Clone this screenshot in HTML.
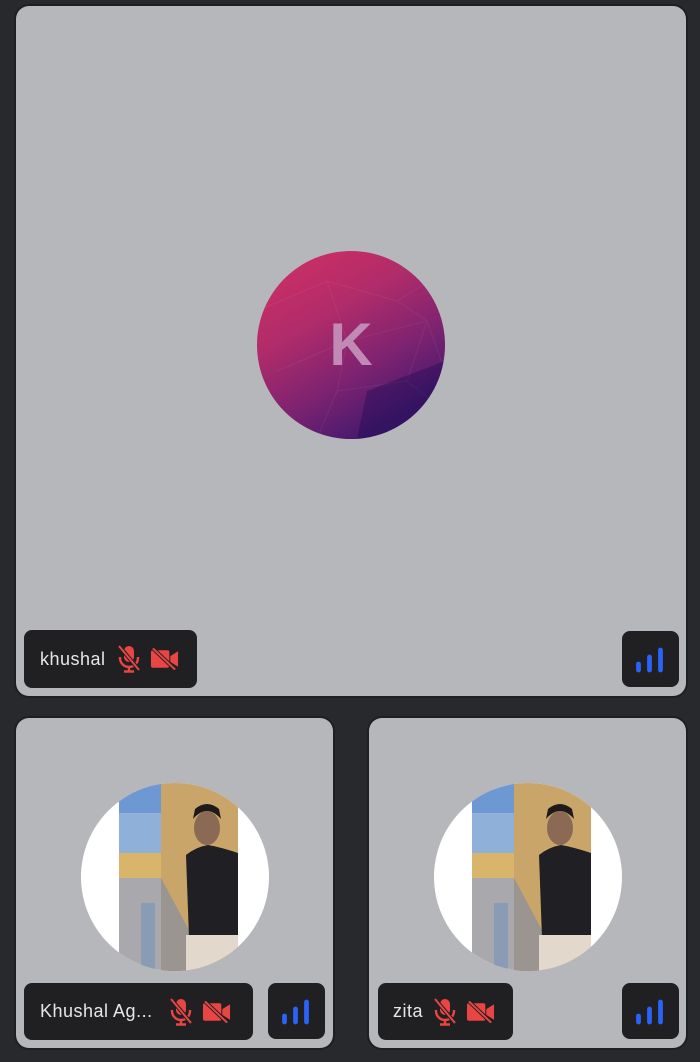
<!DOCTYPE html>
<html><head><meta charset="utf-8"><style>
html,body{margin:0;padding:0;background:#28292d;width:700px;height:1062px;overflow:hidden;font-family:"Liberation Sans",sans-serif}
.tile{position:absolute;background:#b6b7bb;border-radius:13px;box-shadow:0 0 0 2px #1e1f22}
.chip{position:absolute;background:#202022;border-radius:8px;color:#e6e6e6;font-size:18px;letter-spacing:0.5px;display:flex;align-items:center}
.sig{position:absolute;background:#202022;border-radius:8px;width:57px;height:56px}
.av{position:absolute;width:188px;height:188px;border-radius:50%;overflow:hidden}
</style></head><body>
<svg width="0" height="0" style="position:absolute"><defs>
<symbol id="mic" viewBox="0 0 24 28"><rect x="7" y="1" width="10" height="16" rx="5" fill="#e84545"/><path d="M3 12v1a9 9 0 0 0 18 0v-1" stroke="#e84545" stroke-width="2.4" fill="none"/><path d="M12 22v4M7 26.5h10" stroke="#e84545" stroke-width="2.4"/><path d="M2 1L22 25" stroke="#202022" stroke-width="4"/><path d="M2 1L22 25" stroke="#e84545" stroke-width="2"/></symbol>
<symbol id="cam" viewBox="0 0 30 22"><rect x="1" y="2" width="19" height="18" rx="2" fill="#e84545"/><path d="M21 8l8-5v16l-8-5z" fill="#e84545"/><path d="M3 0L26 22" stroke="#202022" stroke-width="4"/><path d="M3 0L26 22" stroke="#e84545" stroke-width="2"/></symbol>
<symbol id="bars" viewBox="0 0 57 56"><path d="M16.5 33v6M27.5 26v13M38.5 19v20" stroke="#2a63f5" stroke-width="4.8" stroke-linecap="round"/></symbol>
<symbol id="photo" viewBox="0 0 188 188"><rect width="188" height="188" fill="#fff"/><rect x="38" y="0" width="42" height="75" fill="#8fb0d8"/><rect x="38" y="0" width="42" height="30" fill="#6e98d2"/><rect x="38" y="70" width="45" height="25" fill="#d8b56a"/><rect x="38" y="95" width="60" height="93" fill="#a9a9ad"/><rect x="60" y="120" width="14" height="68" fill="#8a9bb5"/><rect x="80" y="0" width="77" height="188" fill="#c9a56a"/><path d="M80 95 L115 160 L115 188 L80 188z" fill="#9a9590"/><ellipse cx="126" cy="45" rx="13" ry="17" fill="#8a6a55"/><path d="M112 36 q14-16 28 0 l-2-10 q-12-10-24 0z" fill="#1e1a1a"/><path d="M105 72 q10-8 22-10 q12 2 30 8 V155 H108 z" fill="#1f1f24"/><rect x="105" y="152" width="52" height="36" fill="#e3d8cc"/></symbol>
</defs></svg>

<div class="tile" style="left:16px;top:6px;width:670px;height:690px"></div>
<div style="position:absolute;left:257px;top:251px;width:188px;height:188px;border-radius:50%;overflow:hidden;background:linear-gradient(150deg,#d42f63 0%,#b02c6a 35%,#7f2370 60%,#4a1a6e 82%,#2a1466 100%)">
<svg width="188" height="188" style="position:absolute;left:0;top:0"><path d="M0 60L70 30 140 50 188 20M20 120L90 90 170 70 188 120M60 188L80 140 150 130 188 160M70 30L90 90 80 140M140 50L170 70 150 130" stroke="rgba(255,255,255,0.06)" stroke-width="1" fill="none"/><path d="M110 140L188 110V188H100z" fill="rgba(20,10,80,0.35)"/></svg>
<div style="position:absolute;left:0;top:0;width:188px;height:188px;line-height:188px;text-align:center;font-size:60px;font-weight:bold;color:#c08ab5">K</div></div>
<div class="chip" style="left:24px;top:630px;width:173px;height:58px"><span style="margin-left:16px">khushal</span><svg style="margin-left:11px" width="24" height="28"><use href="#mic"/></svg><svg style="margin-left:9px" width="29" height="22"><use href="#cam"/></svg></div>
<svg class="sig" style="left:622px;top:631px"><use href="#bars"/></svg>

<div class="tile" style="left:16px;top:718px;width:317px;height:330px"></div>
<svg class="av" style="left:81px;top:783px"><use href="#photo"/></svg>
<div class="chip" style="left:24px;top:983px;width:229px;height:57px"><span style="margin-left:16px">Khushal Ag...</span><svg style="margin-left:16px" width="24" height="28"><use href="#mic"/></svg><svg style="margin-left:9px" width="29" height="22"><use href="#cam"/></svg></div>
<svg class="sig" style="left:268px;top:983px"><use href="#bars"/></svg>

<div class="tile" style="left:369px;top:718px;width:317px;height:330px"></div>
<svg class="av" style="left:434px;top:783px"><use href="#photo"/></svg>
<div class="chip" style="left:378px;top:983px;width:135px;height:57px"><span style="margin-left:15px">zita</span><svg style="margin-left:10px" width="24" height="28"><use href="#mic"/></svg><svg style="margin-left:9px" width="29" height="22"><use href="#cam"/></svg></div>
<svg class="sig" style="left:622px;top:983px"><use href="#bars"/></svg>
</body></html>
